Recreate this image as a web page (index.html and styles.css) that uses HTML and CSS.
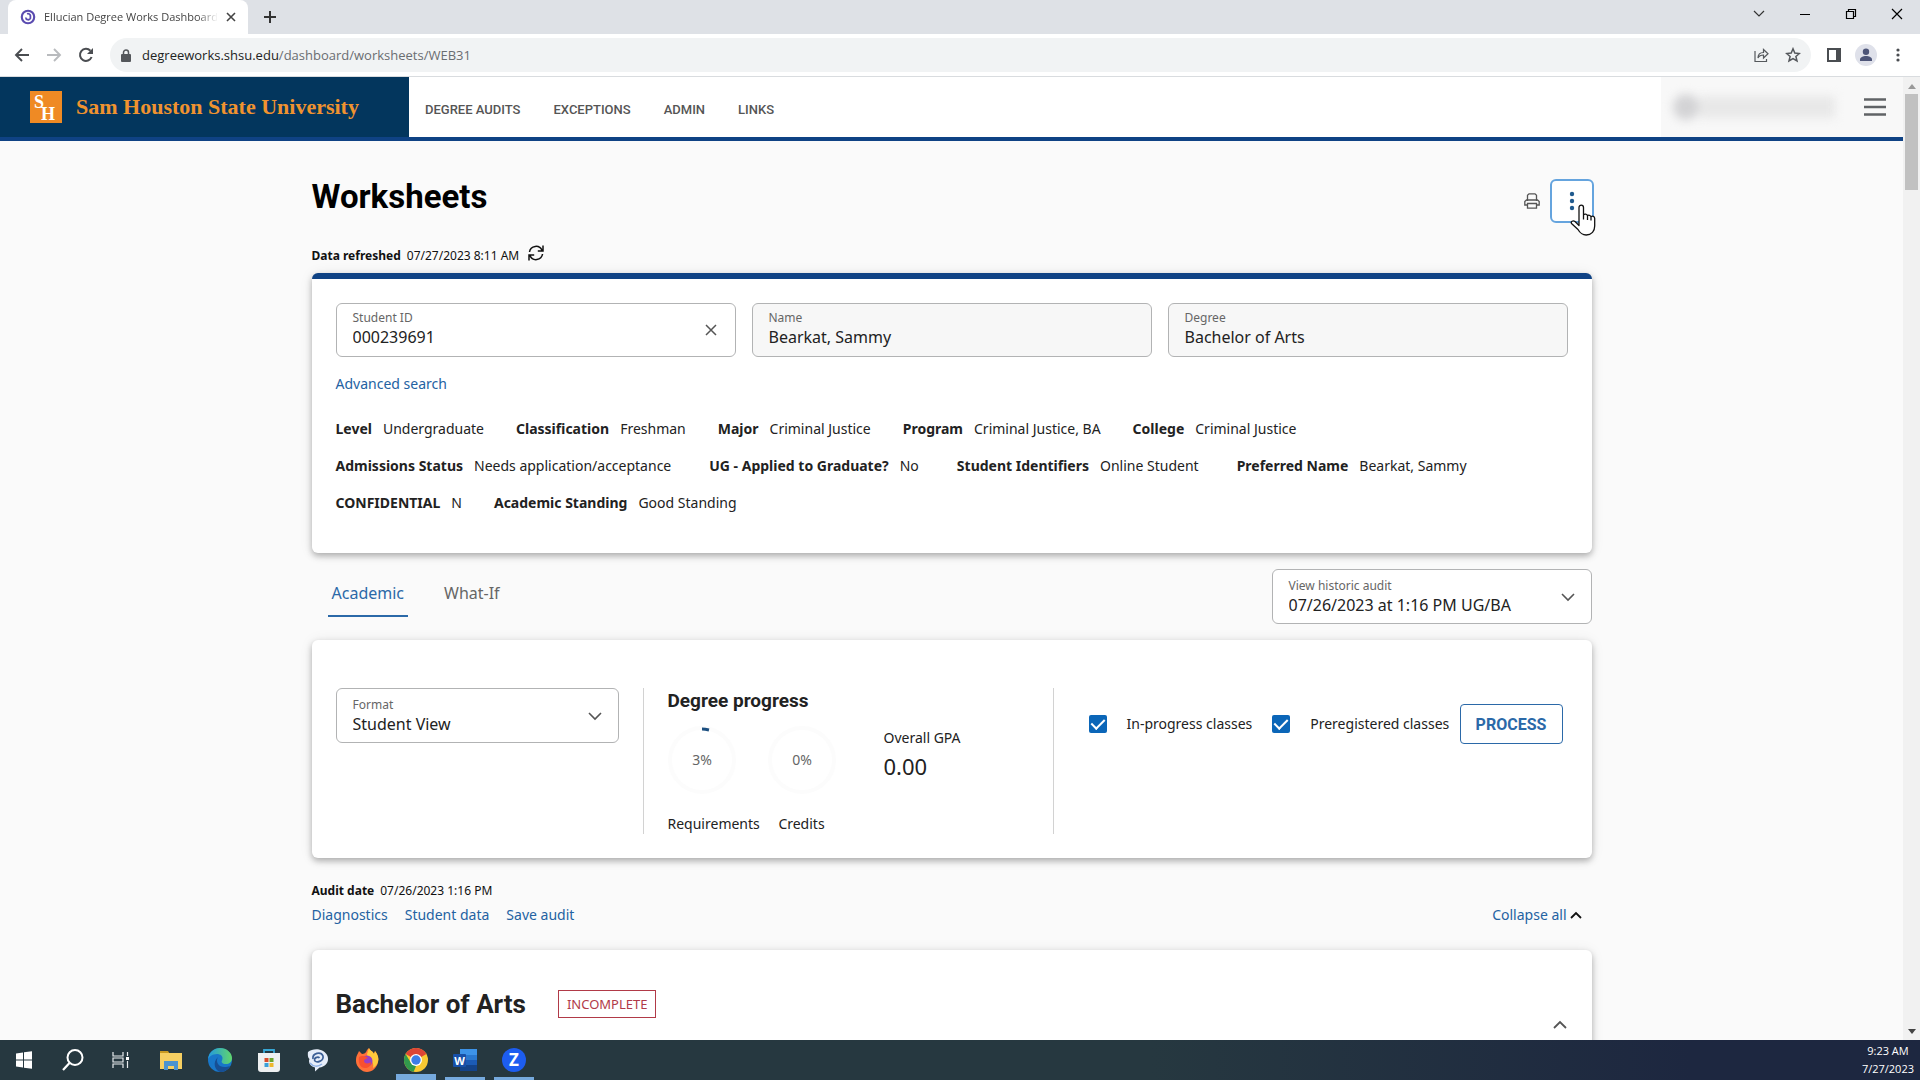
FILE: index.html
```html
<!DOCTYPE html>
<html lang="en">
<head>
<meta charset="utf-8">
<title>Ellucian Degree Works Dashboard</title>
<link rel="stylesheet" href="styles.css">
</head>
<body>
<div class="tabstrip">
  <div class="tab">
    <svg class="tab-logo" viewBox="0 0 18 18"><circle cx="9" cy="9" r="7" fill="none" stroke="#5a4bb0" stroke-width="2.4"/><path d="M6.500 9.500a2.700 2.700 0 0 0 5.200.9V7.500a2.600 2.600 0 0 0-3.700-2" fill="none" stroke="#5a4bb0" stroke-width="2"/></svg>
    <span class="tab-title">Ellucian Degree Works Dashboard</span>
    <button class="bare" aria-label="Close tab"><svg width="10" height="10" viewBox="0 0 10 10"><path d="M1 1l8 8M9 1L1 9" stroke="#444" stroke-width="1.6"/></svg></button>
  </div>
  <button class="bare new-tab" aria-label="New tab"><svg width="12" height="12" viewBox="0 0 12 12"><path d="M6 0v12M0 6h12" stroke="#333" stroke-width="2"/></svg></button>
  <div class="window-buttons">
    <button class="bare" aria-label="Search tabs"><svg width="12" height="12" viewBox="0 0 12 12"><path d="M1 3l5 5 5-5" fill="none" stroke="#333" stroke-width="1.2"/></svg></button>
    <button class="bare" aria-label="Minimize"><svg width="12" height="12" viewBox="0 0 12 12"><path d="M1 6.5h10" stroke="#000"/></svg></button>
    <button class="bare" aria-label="Restore"><svg width="12" height="12" viewBox="0 0 12 12"><path d="M1.5 3.5h7v7h-7zM3.5 3.500v-2h7v7h-2" fill="none" stroke="#000" stroke-width="1.2"/></svg></button>
    <button class="bare" aria-label="Close"><svg width="12" height="12" viewBox="0 0 12 12"><path d="M1 1l10 10M11 1L1 11" stroke="#000" stroke-width="1.2"/></svg></button>
  </div>
</div>
<div class="toolbar">
  <button class="bare" aria-label="Back"><svg width="16" height="16" viewBox="0 0 16 16"><path d="M15 8H2M8 2L2 8l6 6" fill="none" stroke="#4a4d51" stroke-width="1.9"/></svg></button>
  <button class="bare" aria-label="Forward"><svg width="16" height="16" viewBox="0 0 16 16"><path d="M1 8h13M8 2l6 6-6 6" fill="none" stroke="#b9bbbe" stroke-width="1.900"/></svg></button>
  <button class="bare" aria-label="Reload"><svg width="16" height="16" viewBox="0 0 16 16"><path d="M13.600 10a6 6 0 1 1-1.200-6.200" fill="none" stroke="#4a4d51" stroke-width="2"/><path d="M15 1v6H9z" fill="#4a4d51"/></svg></button>
  <div class="omnibox">
    <svg width="10" height="13" viewBox="0 0 10 13"><rect y="5" width="10" height="8" rx="1" fill="#54575b"/><path d="M2.500 6V3.500a2.500 2.500 0 0 1 5 0V6" fill="none" stroke="#54575b" stroke-width="1.500"/></svg>
    <span class="url"><span class="host">degreeworks.shsu.edu</span>/dashboard/worksheets/WEB31</span>
    <button class="bare" aria-label="Share"><svg width="16" height="16" viewBox="0 0 16 16"><path d="M2 4v10.500h11.500V12M5 11c0-3.500 2-5.500 5.500-5.500V2.500L15 6.800 10.500 11V8C8 8 6 9 5 11z" fill="none" stroke="#55585c" stroke-width="1.200"/></svg></button>
    <button class="bare" aria-label="Bookmark"><svg width="16" height="16" viewBox="0 0 16 16"><path d="M8 1.800l1.800 4.300 4.600.4-3.500 3 1.100 4.500-4-2.400-4 2.400 1.100-4.500-3.500-3 4.600-.4z" fill="none" stroke="#55585c" stroke-width="1.500"/></svg></button>
  </div>
  <button class="bare panel-icon" aria-label="Side panel"><svg width="14" height="14" viewBox="0 0 14 14"><rect x="1" y="1" width="12" height="12" fill="none" stroke="#4a4d51" stroke-width="2"/><path d="M9 1h4v12H9z" fill="#4a4d51"/></svg></button>
  <button class="bare profile" aria-label="Profile"><svg width="22" height="22" viewBox="0 0 22 22"><circle cx="11" cy="11" r="11" fill="#dfe1ea"/><circle cx="11" cy="7.700" r="3.200" fill="#4d5578"/><path d="M5 17v-1.500c0-2.200 3-3.500 6-3.500s6 1.300 6 3.500V17z" fill="#4d5578"/></svg></button>
  <button class="bare" aria-label="Chrome menu"><svg width="4" height="14" viewBox="0 0 4 14"><g fill="#4a4d51"><circle cx="2" cy="2" r="1.600"/><circle cx="2" cy="7" r="1.600"/><circle cx="2" cy="12" r="1.600"/></g></svg></button>
</div>

<div class="viewport">
  <div class="page">
    <header class="header">
      <a href="#" class="brand">
        <svg width="32" height="32" viewBox="0 0 32 32" aria-hidden="true"><rect width="32" height="32" fill="#ef8a24"/><text x="4" y="17" class="mono">S</text><text x="11" y="29" class="mono">H</text></svg>
        <span>Sam Houston State University</span>
      </a>
      <nav class="nav">
        <a href="#">DEGREE AUDITS</a><a href="#">EXCEPTIONS</a><a href="#">ADMIN</a><a href="#">LINKS</a>
      </nav>
      <div class="account">
        <div class="user-blur"><i></i><b></b></div>
        <button class="bare" aria-label="Menu"><svg width="22" height="20" viewBox="0 0 22 20"><path d="M0 2.500h22M0 10h22M0 17.500h22" stroke="#606366" stroke-width="2.400"/></svg></button>
      </div>
    </header>

    <main class="container">
      <div class="title-row">
        <h1>Worksheets</h1>
        <button class="bare" aria-label="Print"><svg width="16" height="16" viewBox="0 0 16 16"><path d="M3.500 8V2.200L5 .8h6l1.500 1.400V8M3 12H.8V8.500L2.500 7h11l1.700 1.500V12H13M3.500 10.500h9v4.700h-9z" fill="none" stroke="#555" stroke-width="1.300"/></svg></button>
        <button class="more" aria-label="More options"><svg width="6" height="20" viewBox="0 0 6 20"><g fill="#1f5a8e"><circle cx="3" cy="3" r="2.200"/><circle cx="3" cy="10" r="2.200"/><circle cx="3" cy="17" r="2.200"/></g></svg>
          <svg class="pointer" width="26" height="32" viewBox="0 0 26 32"><path d="M9 19V3.500C9 .3 13.500.3 13.500 3.500V11c1-1.500 3.500-1 4 .7 1-1 3-.5 3.500 1 1.300-1 3.700-.5 3.700 1.800V22c0 5-3 9-8.500 9-4.500 0-6.500-2.500-8.200-5.500L1.500 19.500c-1-2 1.500-3.500 3.500-2l4 4zM13.500 11v4.500M17.500 12v4M21 13v3.500" fill="#fff" stroke="#111" stroke-width="1.300" stroke-linejoin="round"/></svg>
        </button>
      </div>

      <p class="stamp"><b>Data refreshed</b> 07/27/2023 8:11 AM
        <button class="bare" aria-label="Refresh"><svg width="16" height="16" viewBox="0 0 16 16"><path d="M1.500 7A6.500 6.500 0 0 1 14 5.500M15 .500V6H9.800M14.500 9A6.500 6.500 0 0 1 2 10.500M1 15.500V10h5.200" fill="none" stroke="#111" stroke-width="1.500"/></svg></button>
      </p>

      <section class="card student">
        <div class="fields">
          <div class="field"><label for="sid">Student ID</label><input id="sid" value="000239691">
            <button class="bare clear" aria-label="Clear"><svg width="12" height="12" viewBox="0 0 12 12"><path d="M1 1l10 10M11 1L1 11" stroke="#555" stroke-width="1.500"/></svg></button></div>
          <div class="field readonly"><label for="name">Name</label><input id="name" value="Bearkat, Sammy" readonly></div>
          <div class="field readonly"><label for="degree">Degree</label><input id="degree" value="Bachelor of Arts" readonly></div>
        </div>
        <a href="#" class="link advanced">Advanced search</a>
        <dl class="facts">
          <div><dt>Level</dt><dd>Undergraduate</dd></div>
          <div><dt>Classification</dt><dd>Freshman</dd></div>
          <div><dt>Major</dt><dd>Criminal Justice</dd></div>
          <div><dt>Program</dt><dd>Criminal Justice, BA</dd></div>
          <div><dt>College</dt><dd>Criminal Justice</dd></div>
        </dl>
        <dl class="facts spread">
          <div><dt>Admissions Status</dt><dd>Needs application/acceptance</dd></div>
          <div><dt>UG - Applied to Graduate?</dt><dd>No</dd></div>
          <div><dt>Student Identifiers</dt><dd>Online Student</dd></div>
          <div><dt>Preferred Name</dt><dd>Bearkat, Sammy</dd></div>
        </dl>
        <dl class="facts">
          <div><dt>CONFIDENTIAL</dt><dd>N</dd></div>
          <div><dt>Academic Standing</dt><dd>Good Standing</dd></div>
        </dl>
      </section>

      <div class="tabs-row">
        <div class="tabs" role="tablist">
          <button role="tab" class="active" aria-selected="true">Academic</button>
          <button role="tab" aria-selected="false">What-If</button>
        </div>
        <div class="field dropdown historic"><label for="audit">View historic audit</label>
          <select id="audit"><option>07/26/2023 at 1:16 PM UG/BA</option></select>
          <svg class="chev" width="14" height="9" viewBox="0 0 14 9"><path d="M1 1l6 6 6-6" fill="none" stroke="#555" stroke-width="1.600"/></svg></div>
      </div>

      <section class="card options">
        <div class="field dropdown format"><label for="format">Format</label>
          <select id="format"><option>Student View</option></select>
          <svg class="chev" width="14" height="9" viewBox="0 0 14 9"><path d="M1 1l6 6 6-6" fill="none" stroke="#555" stroke-width="1.600"/></svg></div>
        <div class="progress">
          <h2>Degree progress</h2>
          <div class="progress-body">
            <div class="meter"><svg width="68" height="68" viewBox="0 0 68 68"><circle cx="34" cy="34" r="32" class="ring"/><path d="M34 3q3 0 7 1" class="arc"/><text x="34" y="39">3%</text></svg><span>Requirements</span></div>
            <div class="meter centered"><svg width="68" height="68" viewBox="0 0 68 68"><circle cx="34" cy="34" r="32" class="ring"/><text x="34" y="39">0%</text></svg><span>Credits</span></div>
            <div class="gpa"><span>Overall GPA</span><strong>0.00</strong></div>
          </div>
        </div>
        <form class="process">
          <label><input type="checkbox" checked>In-progress classes</label>
          <label><input type="checkbox" checked>Preregistered classes</label>
          <button type="button">PROCESS</button>
        </form>
      </section>

      <p class="stamp audit"><b>Audit date</b> 07/26/2023 1:16 PM</p>
      <div class="links">
        <a href="#" class="link">Diagnostics</a><a href="#" class="link">Student data</a><a href="#" class="link">Save audit</a>
        <a href="#" class="link collapse">Collapse all<svg width="12" height="8" viewBox="0 0 12 8"><path d="M1 7l5-5 5 5" fill="none" stroke="#111" stroke-width="1.800"/></svg></a>
      </div>

      <section class="card block">
        <h2>Bachelor of Arts</h2><span class="badge">INCOMPLETE</span>
        <button class="bare toggle" aria-label="Collapse"><svg width="14" height="9" viewBox="0 0 14 9"><path d="M1 8l6-6 6 6" fill="none" stroke="#555" stroke-width="1.800"/></svg></button>
      </section>
    </main>
  </div>
  <div class="scrollbar"><svg width="8" height="5" viewBox="0 0 8 5"><path d="M4 0l4 5H0z" fill="#999"/></svg><div class="thumb"></div><svg class="down" width="8" height="5" viewBox="0 0 8 5"><path d="M4 5L0 0h8z" fill="#444"/></svg></div>
</div>

<footer class="taskbar">
  <button aria-label="Start"><svg viewBox="0 0 24 24"><path d="M4 5.500l7-1v7H4zM12 4.300l8-1.100v8.300h-8zM4 12.500h7v7l-7-1zM12 12.500h8v8.300l-8-1.100z" fill="#fff"/></svg></button>
  <button aria-label="Search"><svg viewBox="0 0 24 24"><circle cx="14" cy="9.500" r="7.500" fill="none" stroke="#fff" stroke-width="2"/><path d="M8.500 15L2 22" stroke="#fff" stroke-width="2.200"/></svg></button>
  <button aria-label="Task view"><svg viewBox="0 0 24 24"><path d="M3 4v4h10V4M3 20v-4h10v4M3 10h10v4H3zM17.500 4v4M17.500 13v7" fill="none" stroke="#e8ecee" stroke-width="1.200"/><path d="M16 9h3v3h-3z" fill="#fff"/></svg></button>
  <button aria-label="File Explorer"><svg viewBox="0 0 24 24"><path d="M1 3h8l2 3h-10z" fill="#c99a22"/><path d="M1 5h22v16H1z" fill="#f6cf62"/><path d="M5 13h14v9h-4v-4H9v4H5z" fill="#4b93cf"/></svg></button>
  <button aria-label="Edge"><svg viewBox="0 0 24 24"><defs><linearGradient id="eg" x2="1" y2="0"><stop stop-color="#2299df"/><stop offset="1" stop-color="#61d66c"/></linearGradient></defs><circle cx="12" cy="12" r="12" fill="#1877c9"/><path d="M0 11C1 4 6 0 12 0c7 0 12 5 12 10 0 4-3 6-6 6-4 0-5-2-4-3.500C16 8 12 6 9 6 4 6 1 9 0 11z" fill="url(#eg)"/><path d="M10 9c-3 5 1 11 8 10 2 0 3-1 4-1-2 4-6 6-10 6-5-2-8-9-2-15z" fill="#174f94"/></svg></button>
  <button aria-label="Microsoft Store"><svg viewBox="0 0 24 24"><path d="M7 6V2h10v4" fill="none" stroke="#37a7d5" stroke-width="1.800"/><path d="M1 5h22v16q0 3-3 3H4q-3 0-3-3z" fill="#eef0f1"/><path d="M7.500 10h4v4h-4z" fill="#d84c2b"/><path d="M12.500 10h4v4h-4z" fill="#6da62c"/><path d="M7.500 15h4v4h-4z" fill="#3a9fd8"/><path d="M12.500 15h4v4h-4z" fill="#edb72c"/></svg></button>
  <button aria-label="Chat"><svg viewBox="0 0 24 24"><path d="M2 4C8-1 19 1 21.500 8c2 6-2 11-8 11.500L9 23.500v-4C4 18.500 2 14 3.500 11 2 10 1.500 7 2 4z" fill="#e6edf9"/><path d="M7 11C6 5 15 3 17 8c1 5-6 7-8 5-2-3 3-5 4.500-3" fill="none" stroke="#3c5f96" stroke-width="1.700"/><path d="M4 15c3 4 8 4 12 1" fill="none" stroke="#8fb1e6" stroke-width="1.500"/></svg></button>
  <button aria-label="Firefox"><svg viewBox="0 0 24 24"><path d="M1 13C1 7 3 6 4 3l3 3c2 0 4-1 5-4l2-2c1 3 4 3 5 6l1-3c3 4 4 7 3 11-1 6-6 10-11 10S1 19 1 13z" fill="#ff7139"/><path d="M14 0c1 3 4 3 5 6l1-3c3 4 4 7 3 11-1 3-3 5-5 6 2-8-6-9-6-14z" fill="#ffc93b"/><circle cx="12" cy="13" r="5.500" fill="#9a3fc4"/><path d="M4 9c3-2 7-1 9 1-2 1-4 1-4 3 0 3 5 3 7 1 0 4-3 6-6 6-5 0-7-5-6-11z" fill="#f9502f"/></svg></button>
  <button aria-label="Chrome" class="open current"><svg viewBox="0 0 24 24"><circle cx="12" cy="12" r="12" fill="#f9c932"/><path d="M12 12L1.600 6A12 12 0 0 1 22.400 6z" fill="#dd4536"/><path d="M1.600 6L7 15l5 3-2.300 5.800A12 12 0 0 1 1.600 6z" fill="#31994c"/><circle cx="12" cy="12" r="6" fill="#fff"/><circle cx="12" cy="12" r="4.700" fill="#3d7de8"/></svg></button>
  <button aria-label="Word" class="open"><svg viewBox="0 0 24 24"><path d="M7 1h17v6H7z" fill="#3d93e8"/><path d="M7 7h17v5H7z" fill="#2a78cf"/><path d="M7 12h17v5H7z" fill="#1c5bb5"/><path d="M7 17h17v6H7z" fill="#144389"/><rect y="6" width="13" height="13" rx="1" fill="#1850a8"/><text x="6.500" y="16.500" class="app-letter small">W</text></svg></button>
  <button aria-label="Zoom" class="open"><svg viewBox="0 0 24 24"><circle cx="12" cy="12" r="12" fill="#1d5df0"/><text x="12" y="18" class="app-letter">Z</text></svg></button>
  <div class="clock"><span>9:23 AM</span><span>7/27/2023</span></div>
</footer>
</body>
</html>
```
FILE: styles.css
```css
* { box-sizing: border-box; }
html, body { height: 100%; }
body {
  margin: 0;
  display: flex;
  flex-direction: column;
  overflow: hidden;
  font-family: "Noto Sans", sans-serif;
  font-size: 14px;
  line-height: 20px;
  color: #222;
  background: #fafafa;
}
h1, h2, p, dl, dd { margin: 0; }
button, input, select { font: inherit; color: inherit; }
svg { display: block; flex: none; }
a { text-decoration: none; color: inherit; }
.bare { border: 0; padding: 0; background: none; }

/* browser chrome */
.tabstrip {
  display: flex;
  align-items: center;
  flex: none;
  height: 34px;
  padding-left: 8px;
  background: #dee1e6;
  font-family: "Open Sans", sans-serif;
  font-size: 11px;
}
.tab {
  display: flex;
  align-items: center;
  gap: 8px;
  width: 240px;
  height: 34px;
  padding: 0 12px;
  background: #fff;
  border-radius: 8px 8px 0 0;
}
.tab-logo { width: 16px; height: 16px; }
.tab-title {
  flex: 1;
  overflow: hidden;
  white-space: nowrap;
  color: #444;
  mask-image: linear-gradient(90deg, #000 88%, transparent);
}
.new-tab { margin-left: 16px; }
.window-buttons { display: flex; gap: 34px; margin-left: auto; padding-right: 17px; padding-bottom: 6px; }
.toolbar {
  display: flex;
  align-items: center;
  flex: none;
  gap: 16px;
  height: 43px;
  padding: 0 20px 0 14px;
  background: #fff;
  border-bottom: 1px solid #d9dcdf;
  font-family: "Open Sans", sans-serif;
  font-size: 13px;
}
.omnibox {
  display: flex;
  align-items: center;
  flex: 1;
  gap: 16px;
  height: 34px;
  padding: 0 10px 0 11px;
  background: #f1f3f4;
  border-radius: 17px;
}
.url { flex: 1; margin-left: -5px; color: #6a6d71; }
.host { color: #222; }
.panel-icon { margin-right: -2px; }
.profile { margin-right: 3px; }

/* page */
.viewport { display: flex; flex: 1; min-height: 0; }
.page { flex: 1; min-width: 0; overflow: hidden; }
.header {
  display: flex;
  height: 64px;
  background: #fff;
  border-bottom: 4px solid #0f4284;
}
.brand {
  display: flex;
  align-items: center;
  gap: 14px;
  width: 409px;
  padding-left: 30px;
  background: #03365d;
  color: #f0932f;
  font: 700 22px/32px "Liberation Serif", serif;
}
.mono { font: 700 18px "Liberation Serif", serif; fill: #fff; }
.nav {
  display: flex;
  align-items: center;
  gap: 33px;
  padding: 6px 16px 0;
  font-family: Roboto, sans-serif;
  font-size: 13px;
  font-weight: 500;
  color: #555;
}
.account {
  display: flex;
  align-items: center;
  justify-content: space-between;
  width: 242px;
  margin-left: auto;
  padding: 0 17px 0 12px;
  background: #f8f8f8;
}
.user-blur { display: flex; align-items: center; filter: blur(5px); }
.user-blur i { width: 26px; height: 26px; border-radius: 50%; background: #d3d3d5; }
.user-blur b { width: 136px; height: 22px; background: #e8e8e8; }

.container { width: calc(100% - 48px); max-width: 1280px; margin: 0 auto; }
.title-row { display: flex; align-items: center; gap: 10px; margin-right: -2px; padding-top: 38px; }
h1 { flex: 1; align-self: flex-start; font: 700 33px/36px Roboto, sans-serif; color: #000; }
.more {
  position: relative;
  display: flex;
  align-items: center;
  justify-content: center;
  width: 44px;
  height: 44px;
  padding: 0;
  background: #fff;
  border: 2px solid #65a4de;
  border-radius: 6px;
}
.pointer { position: absolute; left: 18px; top: 23px; }
.stamp { display: flex; align-items: center; gap: 6px; font-size: 12px; color: #111; }
.title-row + .stamp { margin: 22px 0 6px; }
.stamp .bare { padding: 0 0 6px 3px; }
.card {
  background: #fff;
  border-radius: 6px;
  box-shadow: 0 3px 6px rgba(0, 0, 0, .28), 0 1px 14px rgba(0, 0, 0, .08);
}
.student { padding: 24px 24px 23px; border-top: 6px solid #0f4284; }
.fields { display: grid; grid-template-columns: repeat(3, 1fr); gap: 16px; }
.field {
  position: relative;
  height: 54px;
  padding: 5px 16px;
  background: #fff;
  border: 1px solid #b2b3b4;
  border-radius: 6px;
}
.dropdown { height: 55px; padding-top: 7px; }
.field label { display: block; font-size: 12px; line-height: 18px; color: #666; }
.field input, .field select {
  display: block;
  width: 100%;
  height: 20px;
  padding: 0;
  border: 0;
  outline: 0;
  appearance: none;
  background: none;
  font-size: 16px;
  line-height: 20px;
}
.readonly { background: #f7f7f7; }
.clear { position: absolute; right: 18px; top: 20px; }
.chev { position: absolute; right: 16px; top: 23px; pointer-events: none; }
.link { color: #2462a2; }
.advanced { display: block; width: max-content; margin: 17px 0 25px; }
.facts { display: flex; gap: 32px; height: 37px; }
.facts div { display: flex; gap: 11px; }
.facts dt { font-weight: 700; }
.spread { gap: 38px; }

.tabs-row { display: flex; justify-content: space-between; padding: 16px 0; }
.tabs { display: flex; gap: 32px; padding-left: 16px; height: 48px; }
.tabs button {
  padding: 2px 4px 0;
  border: 0;
  border-bottom: 2px solid transparent;
  background: none;
  font-size: 16px;
  color: #666;
}
.tabs .active { color: #2b69a8; border-color: #2b69a8; }
.historic { width: 320px; }

.options { display: flex; padding: 48px 24px 24px; }
.format { width: 283px; }
.progress {
  width: 411px;
  height: 146px;
  margin-left: 24px;
  padding-left: 24px;
  border: solid #d2d2d2;
  border-width: 0 1px;
}
.progress h2 { font: 700 19px/26px Roboto, sans-serif; }
.progress-body { display: grid; grid-template-columns: 100px 68px 1fr; padding-top: 12px; }
.meter { display: flex; flex-direction: column; gap: 20px; }
.centered { align-items: center; }
.meter text { font-size: 14px; fill: #666; text-anchor: middle; }
.ring { fill: none; stroke: #fcfcfc; stroke-width: 4px; }
.arc { fill: none; stroke: #1c4f80; stroke-width: 3px; }
.gpa { display: flex; flex-direction: column; gap: 6px; padding: 2px 0 0 48px; }
.gpa strong { font-size: 22px; font-weight: 400; line-height: 24px; }
.process { display: flex; flex: 1; align-items: center; height: 40px; margin: 16px 5px 0 0; padding-left: 35px; }
.process label { display: flex; align-items: center; gap: 20px; margin-right: 20px; white-space: nowrap; }
.process label + label { margin-right: 0; }
.process input {
  display: grid;
  place-items: center;
  width: 18px;
  height: 18px;
  margin: 0;
  appearance: none;
  background: #0b66b8;
  border-radius: 2px;
}
.process input::after {
  content: "";
  width: 6px;
  height: 11px;
  margin-bottom: 3px;
  border: solid #fff;
  border-width: 0 2px 2px 0;
  transform: rotate(45deg);
}
.process button {
  width: 103px;
  height: 40px;
  margin-left: auto;
  padding: 0;
  background: #fff;
  border: 1px solid #2b69a8;
  border-radius: 4px;
  font: 700 16px Roboto, sans-serif;
  color: #2b69a8;
}
.audit { margin: 23px 0 4px; }
.links { display: flex; gap: 17px; }
.collapse { display: flex; align-items: center; gap: 3px; margin: 0 10px 0 auto; }
.block { display: flex; align-items: flex-start; gap: 32px; min-height: 200px; margin-top: 25px; padding: 38px 24px; }
.block h2 { font: 700 26px/32px Roboto, sans-serif; }
.badge { margin-top: 2px; padding: 2px 8px; border: 1px solid #b13a48; font-size: 13px; line-height: 22px; color: #b13a48; }
.toggle { margin: 32px 1px 0 auto; }

.scrollbar { display: flex; flex-direction: column; align-items: center; flex: none; width: 17px; padding: 7px 0 6px; background: #f1f1f1; }
.thumb { width: 13px; height: 96px; margin-top: 5px; background: #c1c1c1; }
.down { margin-top: auto; }

/* taskbar */
.taskbar {
  display: flex;
  flex: none;
  gap: 9px;
  height: 40px;
  padding: 0 6px 0 4px;
  background: linear-gradient(90deg, #263840 60%, #1d2740 88%);
  color: #fff;
}
.taskbar button {
  display: grid;
  place-items: center;
  width: 40px;
  height: 40px;
  padding: 0;
  border: 0;
  background: none;
}
.taskbar button svg { width: 24px; height: 24px; }
.taskbar .open { box-shadow: inset 0 -3px #76aade; }
.taskbar .current { box-shadow: inset 0 -6px #76aade; }
.app-letter { font: 700 17px "Open Sans", sans-serif; fill: #fff; text-anchor: middle; }
.small { font-size: 11px; }
.clock { display: flex; flex-direction: column; align-items: center; margin-left: auto; padding-top: 2px; font: 11px/18px "Open Sans", sans-serif; }
```
